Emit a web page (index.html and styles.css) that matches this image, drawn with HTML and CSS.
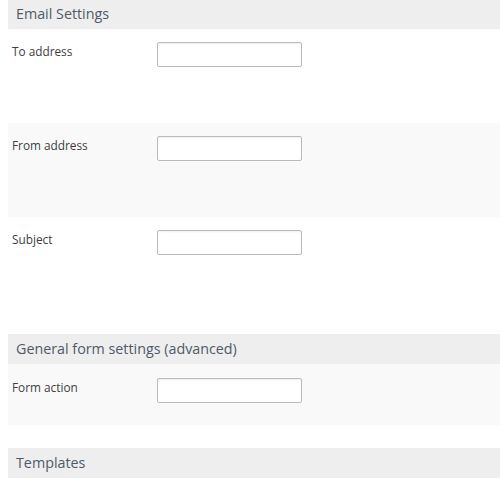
FILE: index.html
```html
<!DOCTYPE html>
<html>
<head>
<meta charset="utf-8">
<link rel="stylesheet" href="styles.css">
</head>
<body>
<div class="page">
  <section class="section">
    <h2 class="section-title">Email Settings</h2>
    <div class="row">
      <label class="row-label">To address</label>
      <input class="text-input" type="text">
    </div>
    <div class="row row-alt">
      <label class="row-label">From address</label>
      <input class="text-input" type="text">
    </div>
    <div class="row">
      <label class="row-label">Subject</label>
      <input class="text-input" type="text">
    </div>
  </section>
  <section class="section">
    <h2 class="section-title">General form settings (advanced)</h2>
    <div class="row row-alt row-short">
      <label class="row-label">Form action</label>
      <input class="text-input" type="text">
    </div>
  </section>
  <section class="section">
    <h2 class="section-title">Templates</h2>
  </section>
</div>
</body>
</html>
```

FILE: styles.css
```css
html, body {
  margin: 0;
  padding: 0;
  background: #ffffff;
}
body {
  font-family: "Open Sans", "Liberation Sans", sans-serif;
  color: #3d3d3d;
}
.page {
  margin: -1px 0 0 8px;
}
.section {
  margin-bottom: 23px;
}
.section-title {
  margin: 0;
  height: 30px;
  line-height: 30px;
  padding: 0 8px;
  background: #eeeeee;
  color: #4f5a69;
  font-size: 14.3px;
  font-weight: normal;
}
.row {
  display: flex;
  align-items: flex-start;
  height: 94px;
  box-sizing: border-box;
  padding: 13px 4px;
  background: #ffffff;
}
.row-alt {
  background: #f9f9f9;
}
.row-short {
  height: 61px;
  padding-top: 14px;
}
.row-label {
  width: 145px;
  flex: none;
  padding-top: 1px;
  font-size: 11.8px;
  line-height: 16px;
  color: #3d3d3d;
}
.text-input {
  width: 145px;
  height: 25px;
  box-sizing: border-box;
  margin: 0;
  padding: 2px 4px;
  border: 1px solid #bbbbbb;
  border-radius: 2px;
  background: #ffffff;
  box-shadow: inset 0 1px 2px rgba(0, 0, 0, 0.07);
  font-family: inherit;
  font-size: 12px;
}
```
